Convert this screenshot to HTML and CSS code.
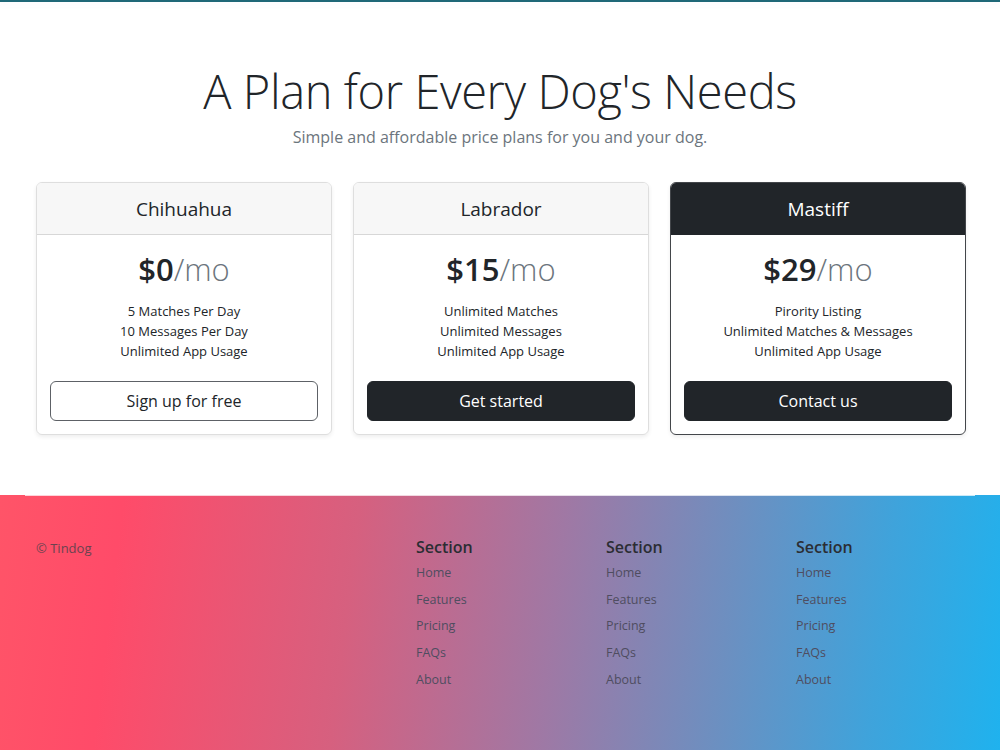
FILE: index.html
```html
<!DOCTYPE html>
<html lang="en">
<head>
<meta charset="utf-8">
<title>Tindog Pricing</title>
<link rel="stylesheet" href="styles.css">
</head>
<body>
  <div class="topline"></div>

  <section class="pricing">
    <header class="pricing-head">
      <h1 class="pricing-title">A Plan for Every Dog's Needs</h1>
      <p class="pricing-lead">Simple and affordable price plans for you and your dog.</p>
    </header>

    <div class="plans">
      <div class="plan">
        <div class="plan-header">Chihuahua</div>
        <div class="plan-body">
          <div class="price"><span class="amount">$0</span><span class="period">/mo</span></div>
          <ul class="features">
            <li>5 Matches Per Day</li>
            <li>10 Messages Per Day</li>
            <li>Unlimited App Usage</li>
          </ul>
          <a class="btn btn-outline" href="#">Sign up for free</a>
        </div>
      </div>

      <div class="plan">
        <div class="plan-header">Labrador</div>
        <div class="plan-body">
          <div class="price"><span class="amount">$15</span><span class="period">/mo</span></div>
          <ul class="features">
            <li>Unlimited Matches</li>
            <li>Unlimited Messages</li>
            <li>Unlimited App Usage</li>
          </ul>
          <a class="btn btn-dark" href="#">Get started</a>
        </div>
      </div>

      <div class="plan plan-featured">
        <div class="plan-header">Mastiff</div>
        <div class="plan-body">
          <div class="price"><span class="amount">$29</span><span class="period">/mo</span></div>
          <ul class="features">
            <li>Pirority Listing</li>
            <li>Unlimited Matches &amp; Messages</li>
            <li>Unlimited App Usage</li>
          </ul>
          <a class="btn btn-dark" href="#">Contact us</a>
        </div>
      </div>
    </div>
  </section>

  <footer class="site-footer">
    <div class="footer-inner">
      <div class="footer-brand">© Tindog</div>
      <div class="footer-col">
        <h5>Section</h5>
        <ul>
          <li><a href="#">Home</a></li>
          <li><a href="#">Features</a></li>
          <li><a href="#">Pricing</a></li>
          <li><a href="#">FAQs</a></li>
          <li><a href="#">About</a></li>
        </ul>
      </div>
      <div class="footer-col">
        <h5>Section</h5>
        <ul>
          <li><a href="#">Home</a></li>
          <li><a href="#">Features</a></li>
          <li><a href="#">Pricing</a></li>
          <li><a href="#">FAQs</a></li>
          <li><a href="#">About</a></li>
        </ul>
      </div>
      <div class="footer-col">
        <h5>Section</h5>
        <ul>
          <li><a href="#">Home</a></li>
          <li><a href="#">Features</a></li>
          <li><a href="#">Pricing</a></li>
          <li><a href="#">FAQs</a></li>
          <li><a href="#">About</a></li>
        </ul>
      </div>
    </div>
  </footer>
</body>
</html>
```

FILE: styles.css
```css
* {
  box-sizing: border-box;
}

html,
body {
  margin: 0;
  padding: 0;
}

body {
  font-family: "Open Sans", "Noto Sans", "DejaVu Sans", sans-serif;
  color: #212529;
  background: #fff;
  overflow: hidden;
  height: 750px;
}

/* thin nav edge at the very top */
.topline {
  height: 2px;
  background: #1f6878;
  box-shadow: 0 2px 6px rgba(120, 110, 220, 0.08);
}

/* ---------- pricing ---------- */
.pricing {
  width: 930px;
  margin: 0 auto;
  padding-top: 60px;
  padding-bottom: 60px;
}

.pricing-head {
  text-align: center;
}

.pricing-title {
  margin: 0;
  font-size: 47px;
  font-weight: 300;
  line-height: 58px;
  letter-spacing: -0.4px;
}

.pricing-lead {
  margin: 4px 0 0;
  font-size: 16px;
  line-height: 26px;
  color: #6c757d;
}

.plans {
  display: grid;
  grid-template-columns: repeat(3, 296px);
  gap: 21px;
  margin-top: 32px;
  padding-left: 1px;
}

.plan {
  border: 1px solid rgba(0, 0, 0, 0.13);
  border-radius: 6px;
  box-shadow: 0 2px 4px rgba(0, 0, 0, 0.07);
  overflow: hidden;
  text-align: center;
}

.plan-header {
  background: #f7f7f7;
  border-bottom: 1px solid rgba(0, 0, 0, 0.13);
  padding: 14px 0 13px;
  font-size: 19px;
  line-height: 24px;
}

.plan-featured {
  border-color: #43464a;
}

.plan-featured .plan-header {
  background: #212529;
  color: #fff;
  border-bottom-color: #212529;
}

.plan-body {
  padding: 14px 13px 13px;
}

.price {
  font-size: 31px;
  line-height: 41px;
}

.amount {
  font-weight: 600;
}

.period {
  font-weight: 300;
  color: #6c757d;
}

.features {
  list-style: none;
  margin: 11px 0 20px;
  padding: 0;
  font-size: 13px;
  line-height: 20px;
}

.btn {
  display: block;
  height: 40px;
  border-radius: 6px;
  font-size: 16px;
  line-height: 38px;
  text-decoration: none;
  border: 1px solid #212529;
}

.btn-outline {
  color: #212529;
  background: #fff;
  border-color: #5d6166;
}

.btn-dark {
  color: #fff;
  background: #212529;
}

/* ---------- footer ---------- */
.site-footer {
  height: 255px;
  background: linear-gradient(97deg, #ff5468 0%, #ff4b69 12%, #d6607f 35%, #a078a4 55%, #6d8fc0 72%, #3fa3db 87%, #1fb2ee 100%);
}

.footer-inner {
  width: 950px;
  margin: 0 auto;
  border-top: 1px solid rgba(255, 255, 255, 0.75);
  padding: 41px 11px 0;
  display: grid;
  grid-template-columns: 380px 190px 190px 190px;
}

.footer-brand {
  font-size: 13px;
  line-height: 20px;
  color: #6b4350;
  padding-top: 1px;
}

.footer-col h5 {
  margin: 0 0 3px;
  font-size: 16px;
  font-weight: 600;
  line-height: 20px;
  color: #2b2d33;
}

.footer-col ul {
  list-style: none;
  margin: 0;
  padding: 0;
}

.footer-col li {
  font-size: 12.5px;
  line-height: 26.7px;
}

.footer-col a {
  color: #4f4d60;
  text-decoration: none;
}
```
